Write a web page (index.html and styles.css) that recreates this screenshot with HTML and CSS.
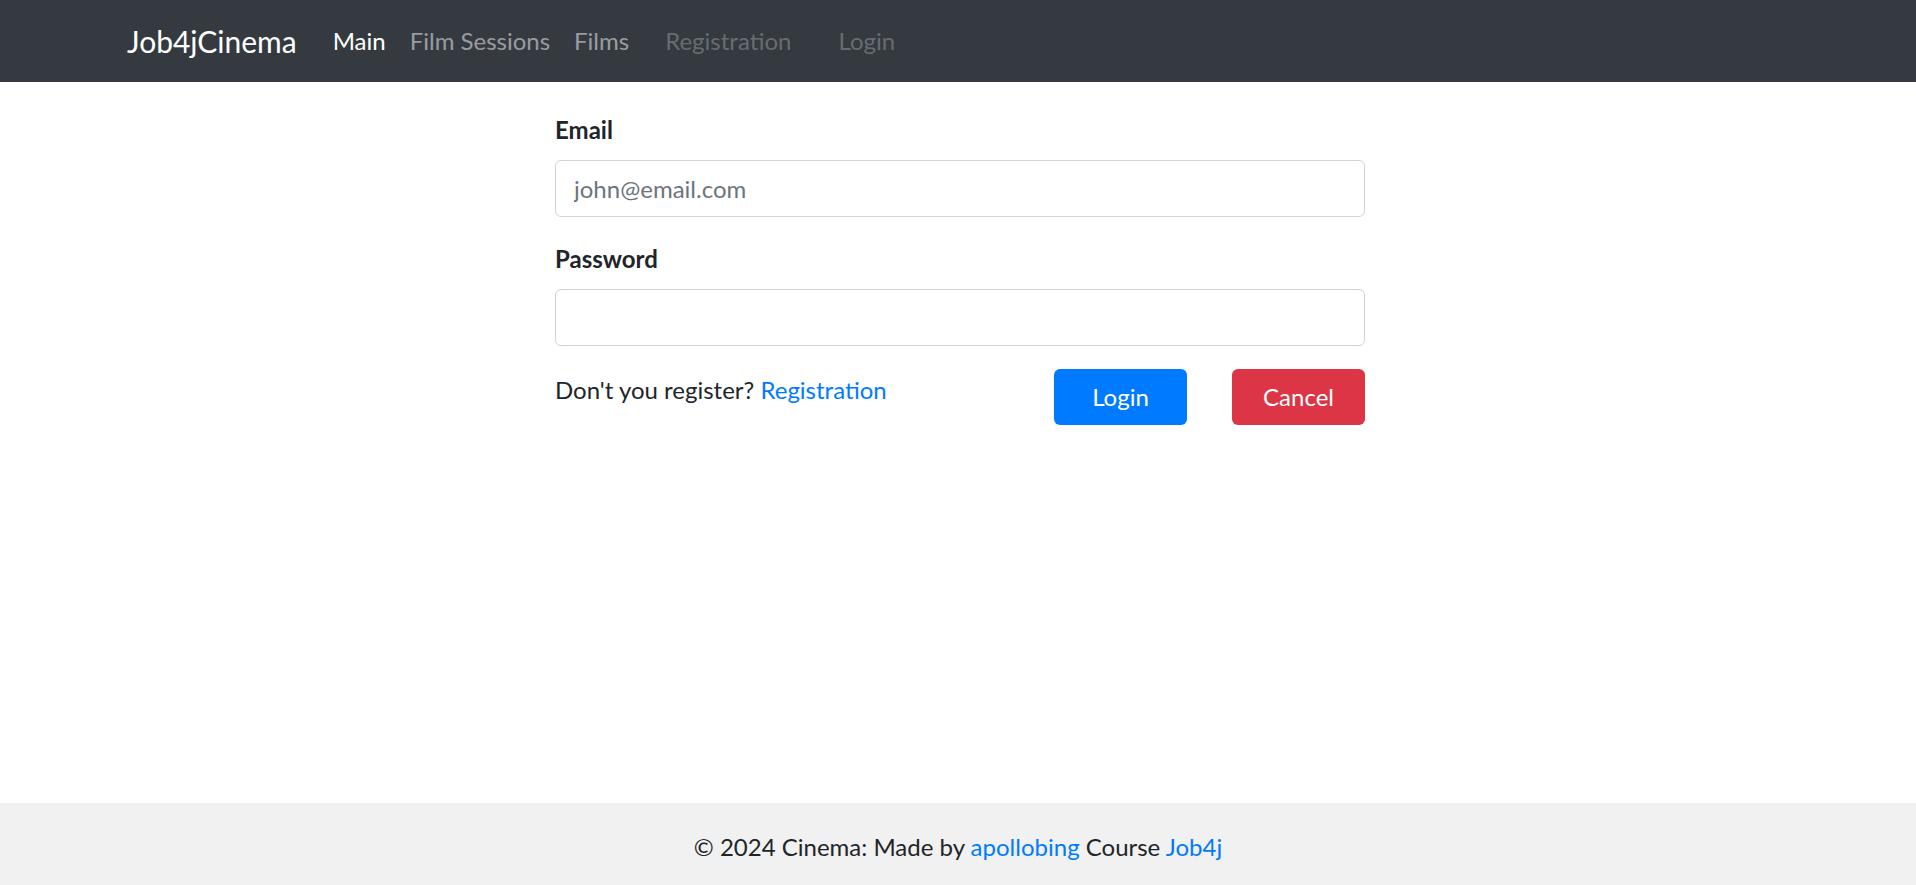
FILE: index.html
```html
<!DOCTYPE html>
<html lang="en">
<head>
<meta charset="utf-8">
<title>Login - Job4jCinema</title>
<link rel="stylesheet" href="styles.css">
</head>
<body>
<header class="navbar">
  <div class="nav-container">
    <a class="brand" href="#">Job4jCinema</a>
    <nav class="nav-main">
      <a class="nav-link active" href="#">Main</a>
      <a class="nav-link" href="#">Film Sessions</a>
      <a class="nav-link" href="#">Films</a>
    </nav>
    <nav class="nav-user">
      <a class="nav-link muted" href="#">Registration</a>
      <a class="nav-link muted login-link" href="#">Login</a>
    </nav>
  </div>
</header>
<main class="content">
  <form class="login-form">
    <div class="form-group">
      <label class="form-label" for="email">Email</label>
      <input class="form-control" id="email" type="email" placeholder="john@email.com">
    </div>
    <div class="form-group">
      <label class="form-label" for="password">Password</label>
      <input class="form-control" id="password" type="password">
    </div>
    <div class="form-actions">
      <div class="register-note">Don't you register? <a class="link" href="#">Registration</a></div>
      <button class="btn btn-primary" type="submit">Login</button>
      <button class="btn btn-danger" type="button">Cancel</button>
    </div>
  </form>
</main>
<footer class="footer">
  <p class="footer-text">© 2024 Cinema: Made by <a class="link" href="#">apollobing</a> Course <a class="link" href="#">Job4j</a></p>
</footer>
</body>
</html>
```
FILE: styles.css
```css
* { box-sizing: border-box; }
html, body { height: 100%; }
body {
  margin: 0;
  font-family: "Segoe UI", Lato, "Noto Sans", sans-serif;
  font-size: 24px;
  line-height: 1.5;
  color: #212529;
  background: #fff;
  display: flex;
  flex-direction: column;
  min-height: 100vh;
}
a { text-decoration: none; }
.link { color: #007bff; }

.navbar {
  background: #343a40;
  height: 82px;
  display: flex;
  align-items: center;
  flex-shrink: 0;
}
.nav-container {
  width: 1710px;
  margin: 0 auto;
  padding: 0 22px 0 24px;
  display: flex;
  align-items: center;
}
.brand {
  color: #fff;
  font-size: 30px;
  line-height: 45px;
  margin-right: 24px;
}
.nav-main, .nav-user { display: flex; align-items: center; }
.nav-user { margin-left: 12px; }
.nav-link {
  color: rgba(255, 255, 255, 0.5);
  padding: 0 12px;
  line-height: 36px;
}
.nav-link.active { color: #fff; }
.nav-link.muted { color: rgba(255, 255, 255, 0.27); }
.nav-link.login-link { margin-left: 23px; }

.content { flex: 1; padding-left: 4px; }
.login-form {
  width: 810px;
  margin: 0 auto;
  padding-top: 30px;
}
.form-group { margin-bottom: 24px; }
.form-label {
  display: block;
  font-weight: 700;
  margin-bottom: 12px;
}
.form-control {
  display: block;
  width: 100%;
  height: 57px;
  padding: 9px 18px;
  font: inherit;
  color: #495057;
  background: #fff;
  border: 1.5px solid #ced4da;
  border-radius: 6px;
}
.form-control::placeholder { color: #6c757d; }
.form-actions {
  display: flex;
  align-items: flex-start;
  margin-top: -1px;
}
.register-note { flex: 1; padding-top: 3px; }
.btn {
  width: 133px;
  height: 56px;
  font: inherit;
  color: #fff;
  border: 0;
  border-radius: 6px;
  padding: 0;
  line-height: 56px;
  cursor: pointer;
}
.btn-primary { background: #007bff; }
.btn-danger { background: #dc3545; margin-left: 45px; }

.footer {
  background: #f1f1f1;
  height: 82px;
  display: flex;
  align-items: center;
  justify-content: center;
  flex-shrink: 0;
}
.footer-text { margin: 0; padding-top: 6px; }
```
